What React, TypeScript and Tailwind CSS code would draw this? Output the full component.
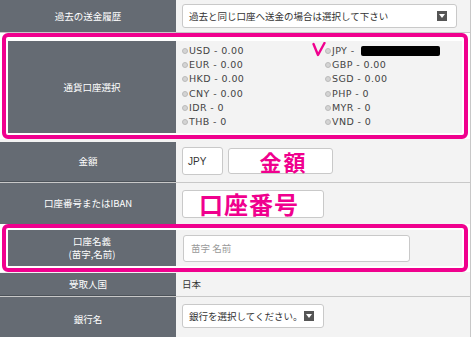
const jp = "font-['Meiryo','Noto_Sans_CJK_JP',sans-serif]";

function Label({ children, className = '' }: { children: React.ReactNode; className?: string }) {
  return (
    <div className={`shrink-0 bg-[#656b73] text-white text-[9.5px] leading-[13px] flex flex-col items-center justify-center text-center ${className}`}>
      {children}
    </div>
  );
}

function Caret() {
  return (
    <span className="w-[10px] h-[10px] bg-[#555] flex items-center justify-center">
      <svg width="6" height="4" viewBox="0 0 6 4">
        <path d="M0 0 H6 L3 4 Z" fill="#fff" />
      </svg>
    </span>
  );
}

function Select({ text, className = '' }: { text: string; className?: string }) {
  return (
    <div className={`h-[24px] bg-white border border-[#c9c9c9] rounded-[3px] flex items-center justify-between pl-[6px] pr-[9px] text-[9.5px] text-[#333] whitespace-nowrap ${className}`}>
      <span>{text}</span>
      <Caret />
    </div>
  );
}

const left = ['USD - 0.00', 'EUR - 0.00', 'HKD - 0.00', 'CNY - 0.00', 'IDR - 0', 'THB - 0'];
const right = ['JPY - ', 'GBP - 0.00', 'SGD - 0.00', 'PHP - 0', 'MYR - 0', 'VND - 0'];

function Currency({ label, bar }: { label: string; bar?: boolean }) {
  return (
    <div className="flex items-center h-[14.2px]">
      <span className="w-[6px] h-[6px] rounded-full bg-[#d4d4d4] border border-[#bbb] mr-[1px]" />
      <span className="font-['DejaVu_Sans',sans-serif] text-[9.5px] tracking-[0.4px] text-[#444] whitespace-pre">{label}</span>
      {bar && <span className="ml-[3px] w-[79px] h-[10px] bg-black rounded-[2px]" />}
    </div>
  );
}

export default function App() {
  return (
    <div className={`w-[474px] h-[337px] overflow-hidden bg-white ${jp}`}>
      <div className="w-[471px] border-r border-[#c8c8c8] bg-[#f3f3f3]">
        {/* 過去の送金履歴 */}
        <div className="flex h-[33px] border-b border-[#c8c8c8]">
          <Label className="w-[176px]">過去の送金履歴</Label>
          <div className="flex-1 flex items-center pl-[6px] pr-[13px]">
            <Select text="過去と同じ口座へ送金の場合は選択して下さい" className="w-full" />
          </div>
        </div>

        {/* 通貨口座選択 (highlighted) */}
        <div className="bg-white">
          <div className="mx-[2px] border-4 border-[#f0008e] rounded-[6px] bg-white pt-[4px] pb-[2px] px-[2px]">
            <div className="flex h-[92px]">
              <Label className="w-[168px]">通貨口座選択</Label>
              <div className="flex-1 bg-[#f3f3f3] pl-[6px] pt-[3px] flex relative">
                <div className="w-[143px] flex flex-col">
                  {left.map(c => <Currency key={c} label={c} />)}
                </div>
                <div className="flex flex-col">
                  {right.map((c, i) => <Currency key={c} label={c} bar={i === 0} />)}
                </div>
                <svg className="absolute left-[136px] top-[1px]" width="14" height="15" viewBox="0 0 14 15">
                  <path d="M1.5 2 L6 13 L12.5 1" fill="none" stroke="#f0008e" strokeWidth="2.4" strokeLinecap="round" strokeLinejoin="round" />
                </svg>
              </div>
            </div>
          </div>
        </div>

        {/* 金額 */}
        <div className="flex h-[41px] mt-[3px] border-b border-[#c8c8c8]">
          <Label className="w-[176px] border-b border-[#4d535a]">金額</Label>
          <div className="flex-1 flex items-center gap-[5px] pl-[6px] pb-[2px]">
            <div className="w-[41px] h-[28px] bg-white border border-[#c9c9c9] rounded-[3px] flex items-center pl-[5px] text-[10px] text-[#333] font-['Liberation_Sans',sans-serif]">JPY</div>
            <div className="w-[105px] h-[26px] bg-white border border-[#c9c9c9] rounded-[3px] flex items-center justify-center">
              <span className="text-[#f0008e] text-[22px] font-bold leading-none tracking-[2px] pl-[6px]">金額</span>
            </div>
          </div>
        </div>

        {/* 口座番号またはIBAN */}
        <div className="flex h-[41px]">
          <Label className="w-[176px]">口座番号またはIBAN</Label>
          <div className="flex-1 flex items-center pl-[6px] pt-[1px]">
            <div className="w-[142px] h-[28px] bg-white border border-[#c9c9c9] rounded-[3px] flex items-center pl-[16px]">
              <span className="text-[#f0008e] text-[24px] font-bold leading-none tracking-[1px]">口座番号</span>
            </div>
          </div>
        </div>

        {/* 口座名義 (highlighted) */}
        <div className="bg-white">
          <div className="mx-[2px] border-4 border-[#f0008e] rounded-[6px] bg-white pt-[2px] pb-[2px] px-[2px]">
            <div className="flex h-[36px]">
              <Label className="w-[168px]">
                <span>口座名義</span>
                <span>(苗字,名前)</span>
              </Label>
              <div className="flex-1 bg-[#f3f3f3] flex items-center pl-[7px]">
                <div className="w-[227px] h-[27px] bg-white border border-[#c9c9c9] rounded-[3px] flex items-center pl-[7px] text-[9.5px] text-[#999]">苗字 名前</div>
              </div>
            </div>
          </div>
        </div>

        {/* 受取人国 */}
        <div className="flex h-[24px] mt-[1px] border-b border-[#c8c8c8]">
          <Label className="w-[176px] border-b border-[#4d535a]">受取人国</Label>
          <div className="flex-1 flex items-center pl-[6px] text-[9.5px] text-[#333]">日本</div>
        </div>

        {/* 銀行名 */}
        <div className="flex h-[44px]">
          <Label className="w-[176px]">銀行名</Label>
          <div className="flex-1 flex items-center pl-[6px] pb-[6px]">
            <Select text="銀行を選択してください。" className="w-[142px]" />
          </div>
        </div>
      </div>
    </div>
  );
}
